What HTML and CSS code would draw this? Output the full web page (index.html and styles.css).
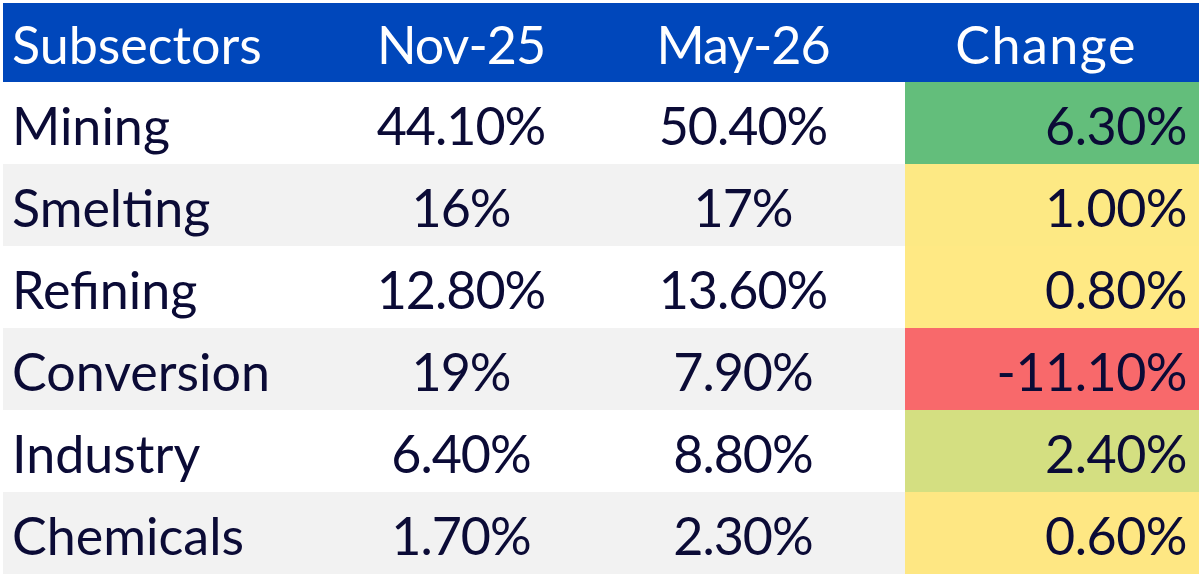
FILE: index.html
```html
<!DOCTYPE html>
<html lang="en">
<head>
<meta charset="utf-8">
<title>Subsectors</title>
<link rel="stylesheet" href="styles.css">
</head>
<body>
<div class="frame">
  <table class="sheet">
    <colgroup>
      <col class="col-name">
      <col class="col-nov">
      <col class="col-may">
      <col class="col-change">
    </colgroup>
    <thead>
      <tr class="head">
        <th class="name">Subsectors</th>
        <th class="mid">Nov-25</th>
        <th class="mid">May-26</th>
        <th class="mid head-change">Change</th>
      </tr>
    </thead>
    <tbody>
      <tr class="odd">
        <td class="name">Mining</td>
        <td class="mid">44.10%</td>
        <td class="mid">50.40%</td>
        <td class="chg c-green">6.30%</td>
      </tr>
      <tr class="even">
        <td class="name">Smelting</td>
        <td class="mid">16%</td>
        <td class="mid">17%</td>
        <td class="chg c-yellow1">1.00%</td>
      </tr>
      <tr class="odd">
        <td class="name">Refining</td>
        <td class="mid">12.80%</td>
        <td class="mid">13.60%</td>
        <td class="chg c-yellow2">0.80%</td>
      </tr>
      <tr class="even">
        <td class="name">Conversion</td>
        <td class="mid">19%</td>
        <td class="mid">7.90%</td>
        <td class="chg c-red">-11.10%</td>
      </tr>
      <tr class="odd">
        <td class="name">Industry</td>
        <td class="mid">6.40%</td>
        <td class="mid">8.80%</td>
        <td class="chg c-lime">2.40%</td>
      </tr>
      <tr class="even">
        <td class="name">Chemicals</td>
        <td class="mid">1.70%</td>
        <td class="mid">2.30%</td>
        <td class="chg c-yellow3">0.60%</td>
      </tr>
    </tbody>
  </table>
</div>
</body>
</html>
```
FILE: styles.css
```css
html, body {
  margin: 0;
  padding: 0;
  background: #ffffff;
}

.frame {
  padding: 3px 1px 3px 3px;
}

.sheet {
  width: 1196px;
  border-collapse: collapse;
  table-layout: fixed;
  font-family: "Lato", "Noto Sans", sans-serif;
  font-size: 52px;
  color: #0b0b36;
}

.col-name { width: 338px; }
.col-nov { width: 240px; }
.col-may { width: 324px; }
.col-change { width: 294px; }

.sheet th,
.sheet td {
  padding: 3px 0 0 0;
  font-weight: 400;
  white-space: nowrap;
  overflow: visible;
  vertical-align: middle;
  line-height: 62px;
}

.head th {
  height: 76px;
  background: #0047bb;
  color: #ffffff;
}

.sheet tbody td {
  height: 79px;
}

.odd td { background: #ffffff; }
.even td { background: #f2f2f2; }

.name {
  text-align: left;
  padding-left: 9px !important;
}

.mid {
  text-align: center;
  letter-spacing: -1px;
}

.head .head-change {
  letter-spacing: 1.5px;
  padding-right: 12px;
}

.chg {
  text-align: right;
  padding-right: 12px !important;
  letter-spacing: -0.5px;
}

.odd .c-green, .even .c-green { background: #63be7b; }
.odd .c-yellow1, .even .c-yellow1 { background: #fde984; }
.odd .c-yellow2, .even .c-yellow2 { background: #ffe984; }
.odd .c-red, .even .c-red { background: #f8696b; }
.odd .c-lime, .even .c-lime { background: #d4df81; }
.odd .c-yellow3, .even .c-yellow3 { background: #fee783; }
```
